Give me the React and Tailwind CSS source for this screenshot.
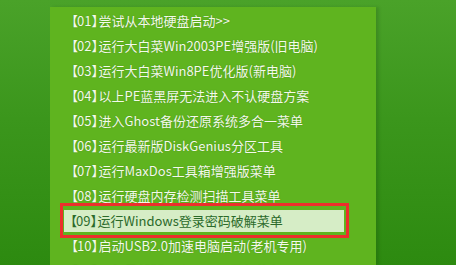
import React from "react";

const items = [
  ["01", "尝试从本地硬盘启动>>"],
  ["02", "运行大白菜Win2003PE增强版(旧电脑)"],
  ["03", "运行大白菜Win8PE优化版(新电脑)"],
  ["04", "以上PE蓝黑屏无法进入不认硬盘方案"],
  ["05", "进入Ghost备份还原系统多合一菜单"],
  ["06", "运行最新版DiskGenius分区工具"],
  ["07", "运行MaxDos工具箱增强版菜单"],
  ["08", "运行硬盘内存检测扫描工具菜单"],
  ["09", "运行Windows登录密码破解菜单"],
  ["10", "启动USB2.0加速电脑启动(老机专用)"],
  ["11", "运行最新版DiskGenius数据恢复"],
];

function Label({ num, text }) {
  return (
    <span className="whitespace-nowrap">
      <span className="inline-block -ml-[7px]">【</span>
      <span className="-ml-[1px]">{num}</span>
      <span className="inline-block -mr-[7px]">】</span>
      <span className="ml-[1px]">{text}</span>
    </span>
  );
}

export default function App() {
  return (
    <div
      className="w-[456px] h-[265px] overflow-hidden bg-[linear-gradient(180deg,#4aa229_0%,#3b961c_45%,#2d8a10_100%)] flex"
      style={{ fontFamily: '"Noto Sans CJK SC", "Noto Sans", sans-serif' }}
    >
      <div className="w-[50px] shrink-0" />
      <div className="w-[326px] shrink-0 mt-[7px] bg-[#5fb41f] pt-[1px] shadow-[3px_0_3px_rgba(0,0,0,0.12)] flex flex-col">
        {items.map(([num, text]) => {
          const sel = num === "09";
          if (sel) {
            return (
              <div key={num} className="h-[25px] shrink-0 flex items-center">
                <div className="ml-[10px] w-[289px] h-[35px] -my-[5px] border-[3px] border-[#ec2f2c] flex items-center pl-[1px] pr-[2px]">
                  <div className="w-full h-[22px] bg-[#d6edc6] flex items-center pl-[7px] text-[13px] leading-none text-[#2b6a2a]">
                    <Label num={num} text={text} />
                  </div>
                </div>
              </div>
            );
          }
          return (
            <div
              key={num}
              className="h-[25px] shrink-0 flex items-center pl-[22px] text-[13px] leading-none text-[#f3faea] [text-shadow:0_0_1px_rgba(40,90,10,0.5)]"
            >
              <Label num={num} text={text} />
            </div>
          );
        })}
      </div>
    </div>
  );
}
